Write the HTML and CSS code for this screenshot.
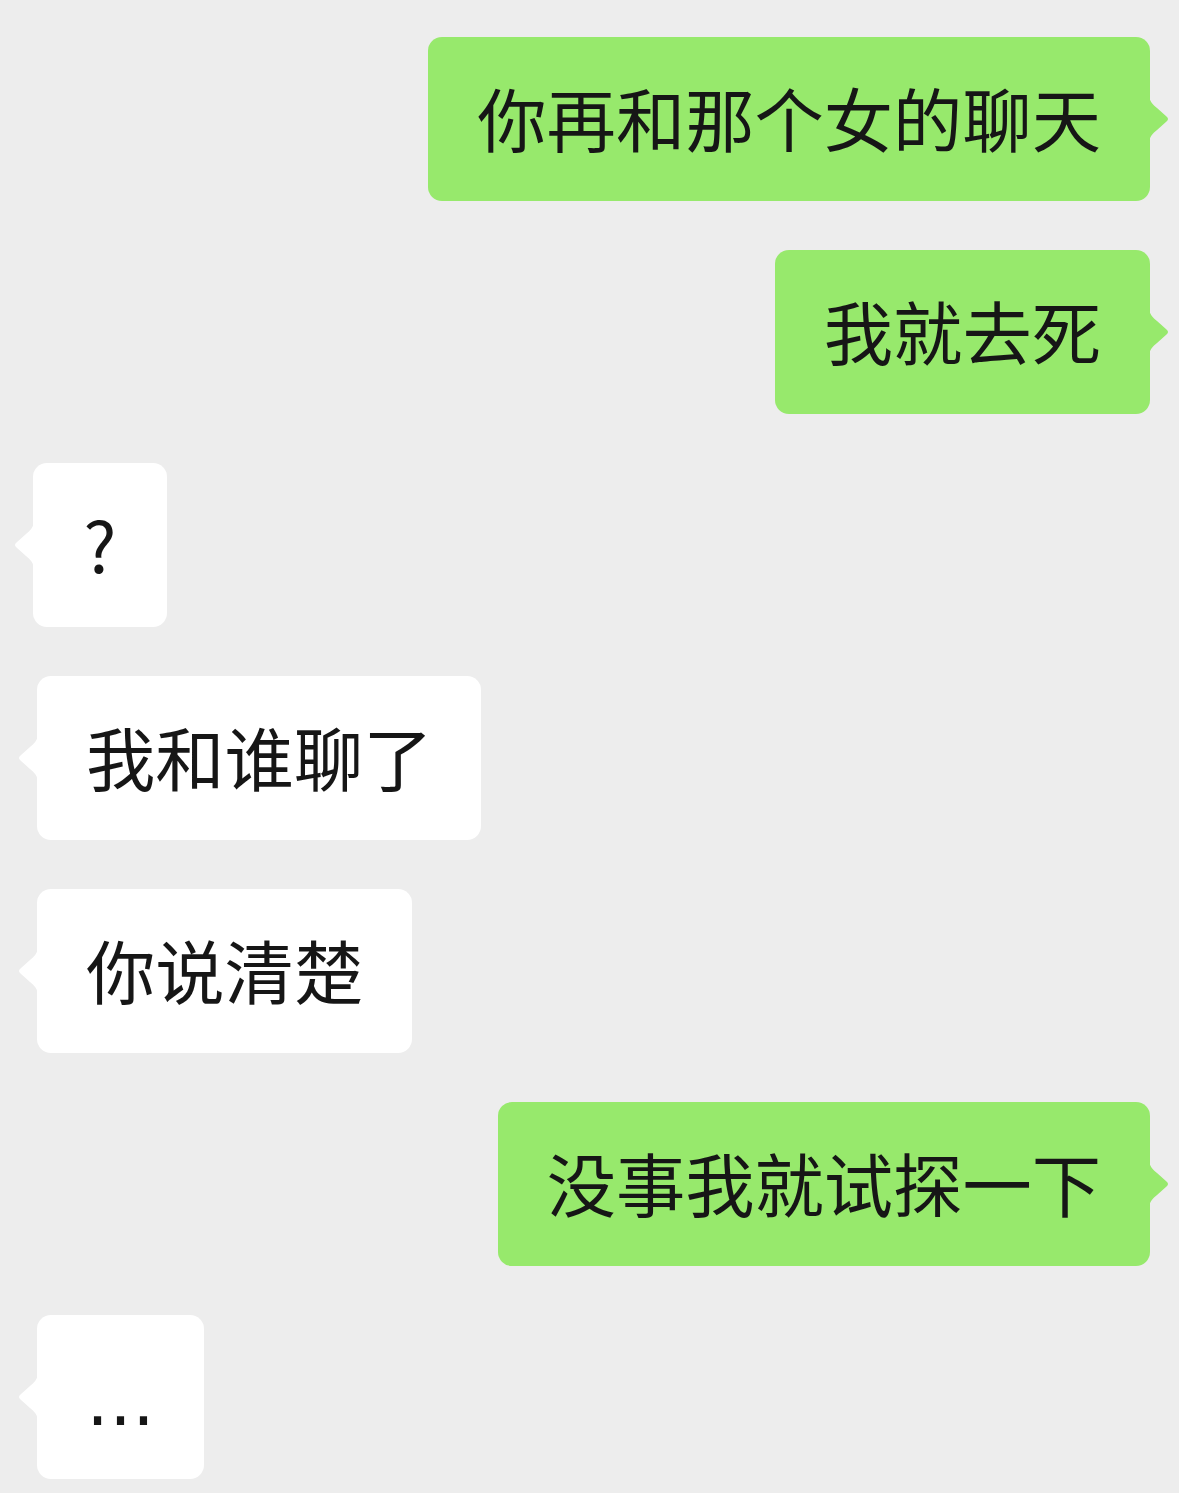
FILE: index.html
```
<!DOCTYPE html>
<html lang="zh-CN">
<head>
<meta charset="utf-8">
<title>聊天</title>
<link rel="stylesheet" href="styles.css">
</head>
<body>
<main class="chat">
  <div class="row row-me"><div class="bubble bubble-me">你再和那个女的聊天</div></div>
  <div class="row row-me"><div class="bubble bubble-me">我就去死</div></div>
  <div class="row row-other row-shift"><div class="bubble bubble-other"><span class="question">?</span></div></div>
  <div class="row row-other"><div class="bubble bubble-other">我和谁聊了</div></div>
  <div class="row row-other"><div class="bubble bubble-other">你说清楚</div></div>
  <div class="row row-me"><div class="bubble bubble-me">没事我就试探一下</div></div>
  <div class="row row-other"><div class="bubble bubble-other"><span class="ellipsis">…</span></div></div>
</main>
</body>
</html>
```
FILE: styles.css
```
html, body {
  margin: 0;
  padding: 0;
  background: #ededed;
}

body {
  width: 1179px;
  height: 1493px;
  overflow: hidden;
  font-family: "Noto Sans CJK SC", "Noto Sans", sans-serif;
  color: #161616;
}

.chat {
  display: flex;
  flex-direction: column;
  gap: 49px;
  padding: 37px 29px 0 37px;
}

.row {
  display: flex;
}

.row-me {
  justify-content: flex-end;
}

.row-other {
  justify-content: flex-start;
}

.row-shift {
  margin-left: -4px;
}

.bubble {
  position: relative;
  box-sizing: border-box;
  height: 164px;
  padding: 45px 49px 49px;
  font-size: 69.3px;
  line-height: 70px;
  border-radius: 14px;
  white-space: nowrap;
}

.bubble-me {
  background: #97e96c;
}

.bubble-other {
  background: #ffffff;
}

.bubble::after {
  content: "";
  position: absolute;
  top: 50%;
  width: 21px;
  height: 50px;
  margin-top: -25px;
  background: inherit;
  clip-path: path("M0 0 C0 7 4 11 8 14 L17.5 22.5 Q20.5 25 17.5 27.5 L8 36 C4 39 0 43 0 50 Z");
}

.bubble-me::after {
  left: 100%;
  margin-left: -1px;
}

.bubble-other::after {
  right: 100%;
  margin-right: -1px;
  transform: scaleX(-1);
}

.question {
  display: inline-block;
  width: 36px;
  text-align: center;
}

.ellipsis {
  display: inline-block;
  width: 69px;
  text-align: center;
  font-family: "DejaVu Sans", sans-serif;
  font-size: 69px;
}
```
